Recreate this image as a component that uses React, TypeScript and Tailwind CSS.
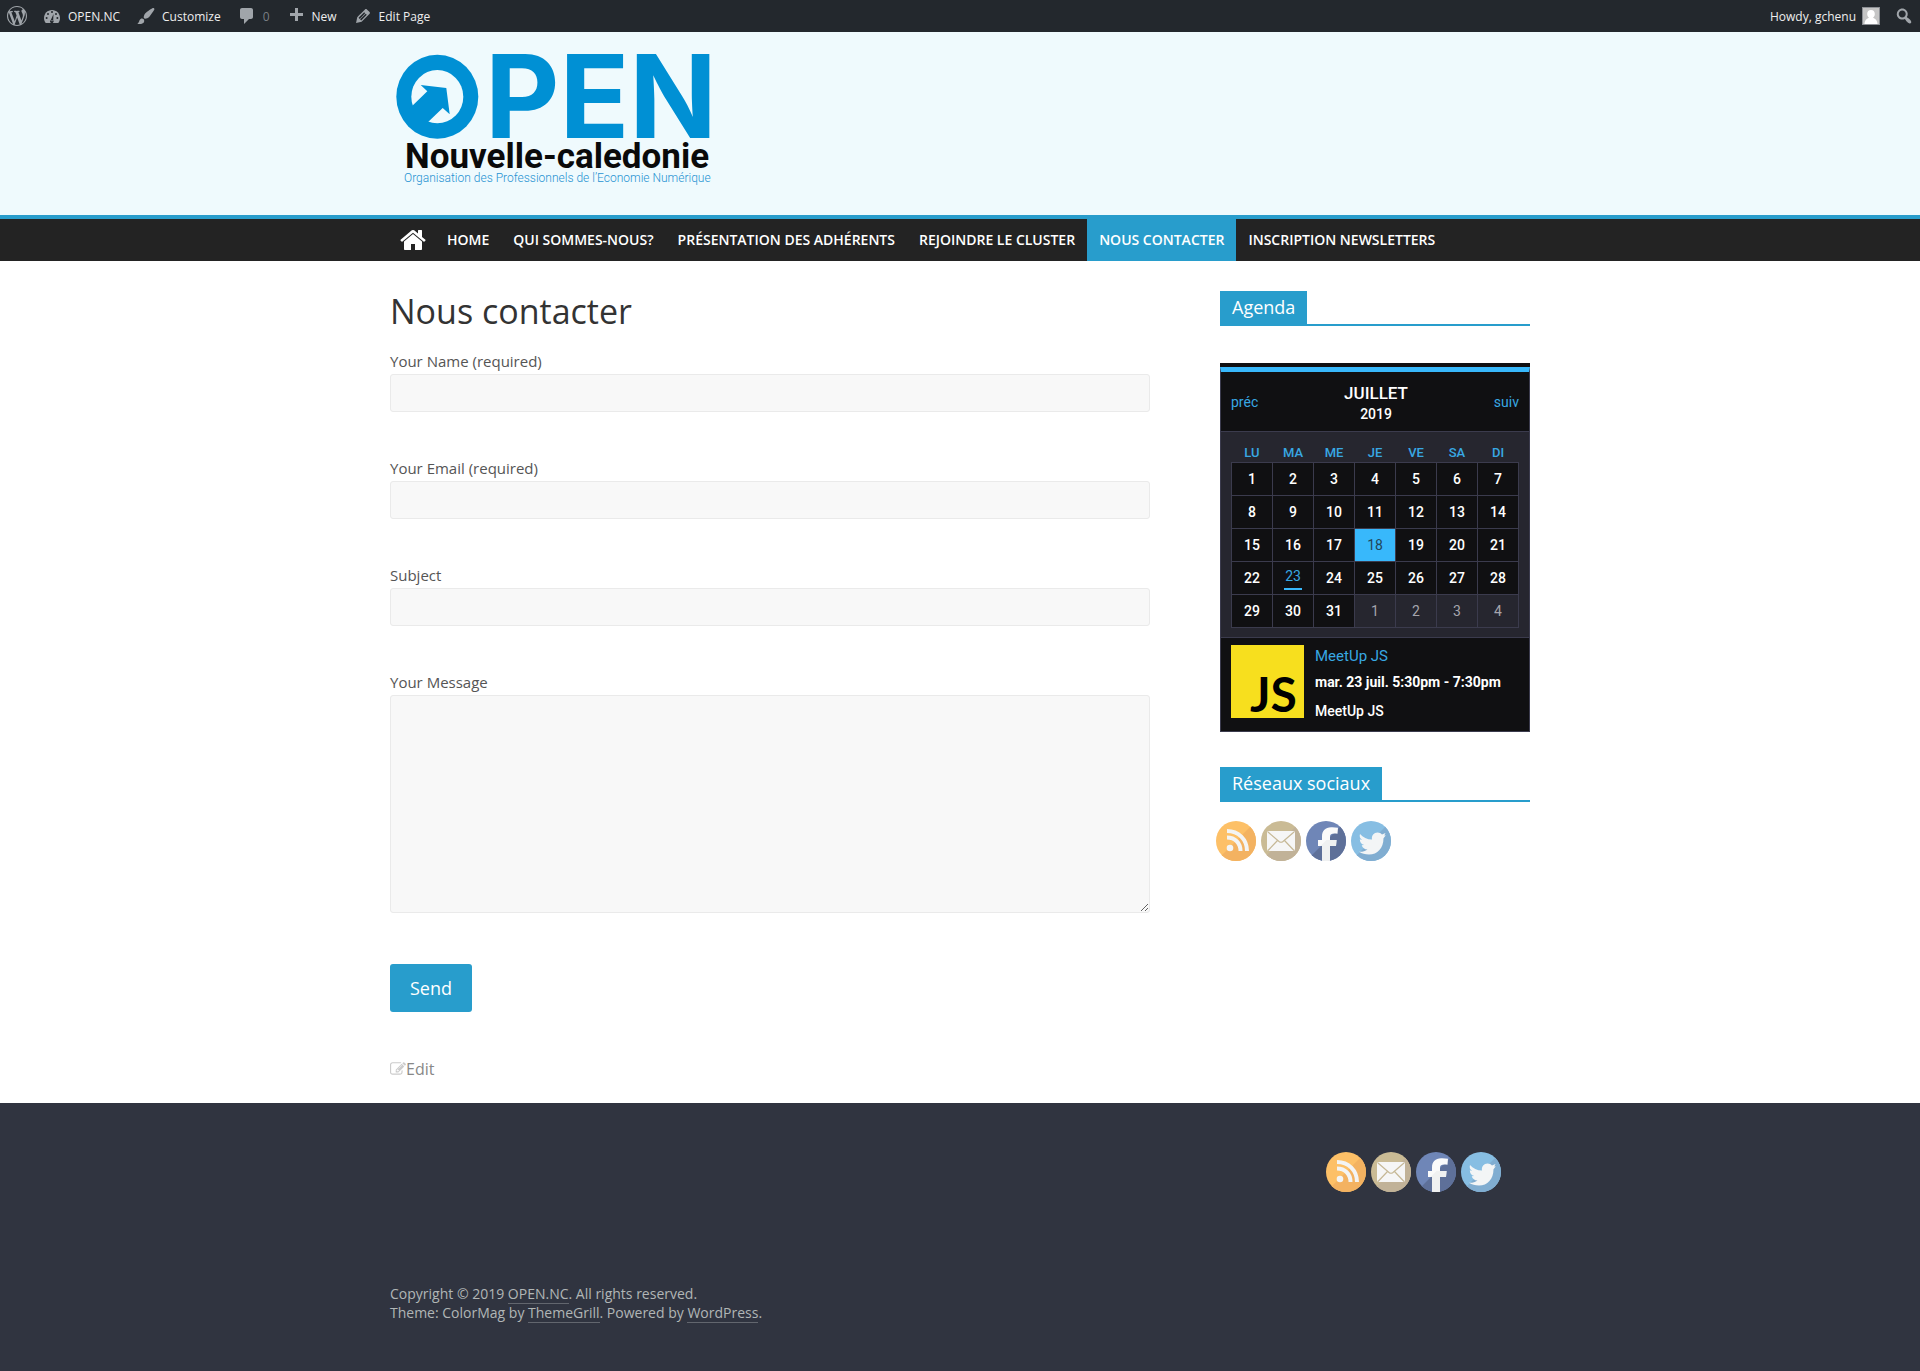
import type { ReactNode } from 'react';

function DashIcon({ d, size = 20 }: { d: string; size?: number }) {
  return (
    <svg width={size} height={size} viewBox="0 0 20 20" fill="#a0a5aa" fillRule="evenodd" aria-hidden="true" className="shrink-0">
      <path d={d} />
    </svg>
  );
}

const DASH = {
  wordpress:
    'M20 10c0-5.51-4.49-10-10-10C4.48 0 0 4.49 0 10c0 5.52 4.48 10 10 10 5.51 0 10-4.48 10-10zM7.78 15.37L4.37 6.22c.55-.02 1.17-.08 1.17-.08.5-.06.44-1.13-.06-1.11 0 0-1.45.11-2.37.11-.18 0-.37 0-.58-.01C4.12 2.69 6.87 1.11 10 1.11c2.33 0 4.45.87 6.05 2.34-.68-.11-1.65.39-1.65 1.58 0 .74.45 1.36.9 2.1.35.61.55 1.36.55 2.46 0 1.49-1.4 5-1.4 5l-3.03-8.37c.54-.02.82-.17.82-.17.5-.05.44-1.25-.06-1.22 0 0-1.44.12-2.38.12-.87 0-2.33-.12-2.33-.12-.5-.03-.56 1.2-.06 1.22l.92.08 1.26 3.41zM17.41 10c.24-.64.74-1.87.43-4.25.7 1.29 1.05 2.71 1.05 4.25 0 3.29-1.73 6.24-4.4 7.78.97-2.59 1.94-5.2 2.92-7.78zM6.1 18.09C3.12 16.65 1.11 13.53 1.11 10c0-1.3.23-2.48.72-3.59C3.25 10.3 4.67 14.2 6.1 18.09zm4.03-6.63l2.58 6.98c-.86.29-1.76.45-2.71.45-.79 0-1.57-.11-2.29-.33.81-2.38 1.62-4.74 2.42-7.1z',
  brush:
    'M18.33 3.57s.27-.8-.31-1.36c-.53-.52-1.22-.24-1.22-.24-.61.3-5.76 3.47-7.67 5.57-.86.96-2.06 3.79-1.09 4.82.92.98 3.96-.17 4.79-1 2.06-2.06 5.21-7.17 5.5-7.79zM1.4 17.65c2.37-1.56 1.46-3.41 3.23-4.64.93-.65 2.22-.62 3.08.29.63.67.8 2.57-.16 3.46-1.57 1.45-4 1.55-6.15.89z',
  comment: 'M5 2h9c1.1 0 2 .9 2 2v7c0 1.1-.9 2-2 2h-2l-5 5v-5H5c-1.1 0-2-.9-2-2V4c0-1.1.9-2 2-2z',
  plus: 'M17 7v3h-5v5H9v-5H4V7h5V2h3v5h5z',
  pencil:
    'M13.89 3.39l2.71 2.72c.46.46.42 1.24.03 1.64l-8.01 8.02-5.56 1.16 1.16-5.58s7.6-7.63 7.99-8.03c.39-.39 1.22-.39 1.68.07zm-2.73 2.79l-5.59 5.61 1.11 1.11 5.54-5.65zm-2.97 8.23l5.58-5.6-1.07-1.08-5.59 5.6z',
  search:
    'M12.14 4.18c1.87 1.87 2.11 4.75.72 6.89.12.1.22.21.36.31.2.16.47.36.81.59.34.24.56.39.66.47.42.31.73.57.94.78.32.32.6.65.84 1 .25.35.44.69.59 1.04.14.35.21.68.18 1-.02.32-.14.59-.36.81s-.49.34-.81.36c-.31.02-.65-.04-.99-.19-.35-.14-.7-.34-1.04-.59-.35-.24-.68-.52-1-.84-.21-.21-.47-.52-.77-.93-.1-.13-.25-.35-.47-.66-.22-.32-.4-.57-.56-.78-.16-.2-.29-.35-.44-.5-2.07 1.09-4.69.76-6.44-.98-2.14-2.15-2.14-5.64 0-7.78 2.15-2.15 5.63-2.15 7.78 0zm-1.41 6.36c1.36-1.37 1.36-3.58 0-4.95-1.37-1.37-3.59-1.37-4.95 0-1.37 1.37-1.37 3.58 0 4.95 1.36 1.37 3.58 1.37 4.95 0z',
};

function DashboardIcon() {
  return (
    <svg width="20" height="20" viewBox="0 0 20 20" aria-hidden="true" className="shrink-0">
      <path fill="#a0a5aa" d="M3.76 17h12.48c1.1-1.37 1.76-3.11 1.76-5 0-4.42-3.58-8-8-8s-8 3.58-8 8c0 1.89.66 3.63 1.76 5z" />
      <g fill="#23282d">
        <circle cx="10" cy="6" r="1" />
        <circle cx="6" cy="8" r="1" />
        <circle cx="14" cy="8" r="1" />
        <circle cx="4.6" cy="12" r="1" />
        <circle cx="15.4" cy="12" r="1" />
        <path d="M11.5 8l-.3 6.2a1.8 1.8 0 1 1-2.4-.3z" />
      </g>
      <circle cx="10" cy="14.6" r=".7" fill="#a0a5aa" />
    </svg>
  );
}

function BarLink({ icon, label, muted }: { icon: ReactNode; label: string; muted?: boolean }) {
  return (
    <a href="#" className="flex h-8 items-center gap-1.5 px-2">
      {icon}
      <span className={muted ? 'pt-0.5 text-[#a0a5aa]/70' : 'pt-0.5'}>{label}</span>
    </a>
  );
}

function AdminBar() {
  return (
    <div className="flex h-8 items-center justify-between bg-[#23282d] font-['Open_Sans',sans-serif] text-[12px] text-[#eeeeee]">
      <div className="flex items-center">
        <a href="#" aria-label="About WordPress" className="px-[7px]">
          <DashIcon d={DASH.wordpress} />
        </a>
        <BarLink icon={<DashboardIcon />} label="OPEN.NC" />
        <BarLink icon={<DashIcon d={DASH.brush} />} label="Customize" />
        <BarLink icon={<DashIcon d={DASH.comment} />} label="0" muted />
        <BarLink icon={<DashIcon d={DASH.plus} />} label="New" />
        <BarLink icon={<DashIcon d={DASH.pencil} />} label="Edit Page" />
      </div>
      <div className="flex items-center gap-2.5 pr-0.5">
        <a href="#" className="flex items-center gap-1.5">
          <span className="pt-0.5">Howdy, gchenu</span>
          <svg width="18" height="18" viewBox="0 0 18 18" aria-hidden="true">
            <rect width="18" height="18" fill="#c5c5c5" />
            <rect x=".5" y=".5" width="17" height="17" fill="none" stroke="#8c8f94" />
            <path fill="#fff" d="M9 3c2.400 0 3.800 1.700 3.800 3.900 0 1.600-.8 3-1.800 3.800 1 .9 4.200 1 4.500 6.300h-13c.3-5.300 3.500-5.400 4.500-6.300-1-.8-1.800-2.200-1.800-3.800C5.200 4.700 6.600 3 9 3z" />
          </svg>
        </a>
        <button type="button" aria-label="Search" className="px-1">
          <DashIcon d={DASH.search} />
        </button>
      </div>
    </div>
  );
}

function SiteLogo() {
  return (
    <svg width="330" height="140" viewBox="0 0 330 140" role="img" aria-label="OPEN Nouvelle-caledonie" className="overflow-visible">
      <ellipse cx="47.300" cy="46.800" rx="41" ry="42" fill="#0090d4" />
      <ellipse cx="47.300" cy="46.700" rx="26" ry="26.600" fill="#effafd" />
      <path fill="#0090d4" d="M30.700 35 56.300 38 59.700 64.300 52.700 58 36 74 18 60 37.300 41.300z" />
      <text x="95" y="88" fontSize="115" className="fill-[#0090d4] font-['Inter',sans-serif] font-bold">PEN</text>
      <text x="15" y="118" fontSize="35" className="fill-[#0a0a0a] font-['Roboto',sans-serif] font-bold">Nouvelle-caledonie</text>
      <text x="14" y="132" fontSize="12" className="fill-[#1f92d2] font-['Roboto',sans-serif] font-light">
        Organisation des Professionnels de l’Economie Numérique
      </text>
    </svg>
  );
}

const NAV = ['Home', 'Qui sommes-nous?', 'Présentation des adhérents', 'Rejoindre le cluster', 'Nous contacter', 'Inscription newsletters'];

function Navigation() {
  return (
    <nav className="border-t-4 border-[#289dcc] bg-[#232323]">
      <div className="mx-auto flex max-w-[1140px] items-stretch">
        <a href="#" aria-label="Accueil" className="flex items-center pr-2 pl-[9px]">
          <svg width="28" height="28" viewBox="0 0 1792 1792" fill="#fff" aria-hidden="true">
            <path d="M1472 992v480q0 26-19 45t-45 19h-384v-384h-256v384h-384q-26 0-45-19t-19-45v-480q0-1 .5-3t.5-3l575-474 575 474q1 2 1 6zm223-69l-62 74q-8 9-21 11h-3q-13 0-21-7l-692-577-692 577q-12 8-24 7-13-2-21-11l-62-74q-8-10-7-23.500t11-21.500l719-599q32-26 76-26t76 26l244 204v-195q0-14 9-23t23-9h192q14 0 23 9t9 23v408l219 182q10 8 11 21.500t-7 23.500z" />
          </svg>
        </a>
        {NAV.map((item) => (
          <a
            key={item}
            href="#"
            className={
              item === 'Nous contacter'
                ? 'bg-[#289dcc] px-3 py-[11px] text-sm font-semibold text-white uppercase'
                : 'px-3 py-[11px] text-sm font-semibold text-white uppercase'
            }
          >
            {item}
          </a>
        ))}
      </div>
    </nav>
  );
}

const FIELD = 'block w-full rounded-[3px] border border-[#eaeaea] bg-[#f8f8f8] px-2 text-base text-[#444444]';
const LABEL = 'block pb-0.5 text-[15px] leading-[22px]';

function TextField({ id, label, type = 'text' }: { id: string; label: string; type?: string }) {
  return (
    <div className="mb-[45px]">
      <label htmlFor={id} className={LABEL}>{label}</label>
      <input id={id} type={type} className={`${FIELD} h-[38px]`} />
    </div>
  );
}

function ContactForm() {
  return (
    <main className="w-2/3">
      <h1 className="mb-[19px] text-[34px] leading-10 text-[#333333]">Nous contacter</h1>
      <form className="text-[#555555]">
        <TextField id="your-name" label="Your Name (required)" />
        <TextField id="your-email" label="Your Email (required)" type="email" />
        <TextField id="your-subject" label="Subject" />
        <label htmlFor="your-message" className={LABEL}>Your Message</label>
        <textarea id="your-message" className={`${FIELD} h-[218px] resize-y`} />
        <button type="button" className="mt-[51px] h-12 rounded-[3px] bg-[#289dcc] px-5 text-lg text-white">Send</button>
      </form>
      <a href="#" className="mt-[45px] flex items-center text-base text-[#888888]">
        <svg width="16" height="16" viewBox="0 0 1792 1792" fill="#cccccc" aria-hidden="true">
          <path d="M888 1184l116-116-152-152-116 116v56h96v96h56zm440-720q-16-16-33 1l-350 350q-17 17-1 33t33-1l350-350q17-17 1-33zm80 594v190q0 119-84.500 203.500t-203.500 84.500h-832q-119 0-203.500-84.500t-84.500-203.500v-832q0-119 84.500-203.500t203.500-84.500h832q63 0 117 25 15 7 18 23 3 17-9 29l-49 49q-14 14-32 8-23-6-45-6h-832q-66 0-113 47t-47 113v832q0 66 47 113t113 47h832q66 0 113-47t47-113v-126q0-13 9-22l64-64q15-15 35-7t20 29zm-96-738l288 288-672 672h-288v-288zm444 132l-92 92-288-288 92-92q28-28 68-28t68 28l152 152q28 28 28 68t-28 68z" />
        </svg>
        Edit
      </a>
    </main>
  );
}

function WidgetTitle({ children }: { children: ReactNode }) {
  return (
    <h3 className="flex border-b-2 border-[#289dcc] text-lg leading-[33px] text-white">
      <span className="bg-[#289dcc] px-3">{children}</span>
    </h3>
  );
}

const DAY_NAMES = ['LU', 'MA', 'ME', 'JE', 'VE', 'SA', 'DI'];
const WEEKS = [0, 1, 2, 3, 4].map((w) => [1, 2, 3, 4, 5, 6, 7].map((d) => w * 7 + d));

function DayCell({ n }: { n: number }) {
  const base = 'h-[33px] border border-[#3b3b4d] p-0 text-center';
  if (n > 31) return <td className={`${base} font-normal text-[#a5a5ad]`}>{n - 31}</td>;
  if (n === 18) return <td className={`${base} bg-[#38b8fb] font-normal text-[#22465a]`}>18</td>;
  if (n === 23)
    return (
      <td className={`${base} bg-[#101012]`}>
        <a href="#" className="inline-block border-b-2 border-[#38b8fb] px-px pb-1 leading-4 font-normal text-[#38a8e3]">23</a>
      </td>
    );
  return <td className={`${base} bg-[#101012] font-medium text-white`}>{n}</td>;
}

function Calendar() {
  return (
    <section aria-label="Agenda" className="mt-[37px] border-t-4 border-[#101012] font-['Roboto',sans-serif] text-sm">
      <div className="border border-t-[5px] border-[#3b3b4d] border-t-[#38b8fb] bg-[#26262f]">
        <header className="flex h-[60px] items-center justify-between border-b border-[#3b3b4d] bg-[#101012] px-2.5 text-[#38a8e3]">
          <a href="#">préc</a>
          <div className="pt-0.5 text-center font-medium text-white">
            <div className="text-[17px] leading-[22px]">JUILLET</div>
            <div className="leading-5">2019</div>
          </div>
          <a href="#">suiv</a>
        </header>
        <div className="px-2.5 pt-2 pb-[9px]">
          <table className="w-full table-fixed border-collapse">
            <thead>
              <tr>
                {DAY_NAMES.map((d) => (
                  <th key={d} className="h-[22px] p-0 pt-1 text-[13px] leading-4 font-medium text-[#38a8e3]">{d}</th>
                ))}
              </tr>
            </thead>
            <tbody>
              {WEEKS.map((week) => (
                <tr key={week[0]}>
                  {week.map((n) => (
                    <DayCell key={n} n={n} />
                  ))}
                </tr>
              ))}
            </tbody>
          </table>
        </div>
        <div className="flex gap-[11px] border-t border-[#3b3b4d] bg-[#101012] px-2.5 pt-[7px] pb-2.5 text-white">
          <svg width="73" height="73" viewBox="0 0 73 73" role="img" aria-label="JS" className="shrink-0 overflow-visible">
            <rect width="73" height="73" fill="#f7df1e" />
            <text x="19" y="67" fontSize="48" className="fill-black font-['Lato',sans-serif] font-bold">JS</text>
          </svg>
          <div>
            <a href="#" className="block text-[15px] leading-[22px] text-[#38a8e3]">MeetUp JS</a>
            <p className="mt-1 leading-[22px] font-bold">mar. 23 juil. 5:30pm - 7:30pm</p>
            <p className="mt-2 leading-5 font-medium">MeetUp JS</p>
          </div>
        </div>
      </div>
    </section>
  );
}

function RoundIcon({ id, light, dark, children }: { id: string; light: string; dark: string; children: ReactNode }) {
  return (
    <svg width="40" height="40" viewBox="0 0 40 40" aria-hidden="true">
      <defs>
        <clipPath id={id}>
          <circle cx="20" cy="20" r="20" />
        </clipPath>
      </defs>
      <g clipPath={`url(#${id})`}>
        <rect width="40" height="40" fill={light} />
        <path d="M40 0V40H0z" fill={dark} />
        {children}
      </g>
    </svg>
  );
}

function SocialLinks({ place }: { place: string }) {
  return (
    <div className="flex gap-[5px]">
      <a href="#" aria-label="RSS">
        <RoundIcon id={`${place}-rss`} light="#fdc067" dark="#f3b261">
          <circle cx="14" cy="27" r="3.300" fill="#f3f4f4" />
          <path d="M11 16.500C19 16.500 24.500 22 24.500 30M11 10C22.500 10 31 18.500 31 30" fill="none" stroke="#f3f4f4" strokeWidth="4" />
        </RoundIcon>
      </a>
      <a href="#" aria-label="Email">
        <RoundIcon id={`${place}-mail`} light="#cabb95" dark="#c1b298">
          <rect x="6" y="10" width="28" height="20" rx="2" fill="#f6f6f6" />
          <path d="M7 11 18 20.500q2 1.500 4 0L33 11M7 29.500 16.500 19.500M33 29.500 23.500 19.500" fill="none" stroke="#c6b896" strokeWidth="1.200" />
        </RoundIcon>
      </a>
      <a href="#" aria-label="Facebook">
        <RoundIcon id={`${place}-fb`} light="#6f86b7" dark="#5e7099">
          <path d="M16 40V25h-4v-6h4v-3.500C16 9.500 19.500 6.500 25 6.300c2.500-.1 4.500.1 7 .5l-.5 6c-5.500-.6-7.500.2-7.500 3.200v3h6.500l-.5 6h-6v15z" fill="#fafafa" />
          <path d="M16 40V25h-1.500L20.500 19h10l-.5 6h-6v15z" fill="#f0f1f1" />
        </RoundIcon>
      </a>
      <a href="#" aria-label="Twitter">
        <RoundIcon id={`${place}-tw`} light="#87bee3" dark="#80add1">
          <path d="M9 13c3 3.500 7 5.500 12 5.500-.7-4 2-7 5.500-7 2 0 3.500.8 4.500 2l3.500-1.500-1.200 2.500 1.500-.3-2.300 3C32.500 27 26.500 33.500 18 33.500c-4 0-7-1-10-2.700 3.500.2 6-.6 8.500-2.300-3 0-5-1.800-5.800-4.200l2.500-.2c-2.800-.8-4.400-3-4.400-5.800l2.400.7C9 17.500 8.200 15.500 9 13z" fill="#f3f5f6" />
        </RoundIcon>
      </a>
    </div>
  );
}

function FooterLink({ children }: { children: ReactNode }) {
  return <a href="#" className="border-b border-[#62666e]">{children}</a>;
}

export default function App() {
  return (
    <div className="flex min-h-screen flex-col bg-white font-['Open_Sans',sans-serif]">
      <AdminBar />
      <header className="bg-[#effafd]">
        <div className="mx-auto max-w-[1140px] pt-[18px] pb-[25px]">
          <a href="#" className="inline-block align-top">
            <SiteLogo />
          </a>
        </div>
      </header>
      <Navigation />
      <div className="mx-auto flex w-full max-w-[1140px] justify-between pt-[30px] pb-[22px]">
        <ContactForm />
        <aside className="w-[310px]">
          <WidgetTitle>Agenda</WidgetTitle>
          <Calendar />
          <div className="mt-[35px]">
            <WidgetTitle>Réseaux sociaux</WidgetTitle>
            <div className="mt-[19px] -ml-1">
              <SocialLinks place="side" />
            </div>
          </div>
        </aside>
      </div>
      <footer className="flex-1 bg-[#303440]">
        <div className="mx-auto max-w-[1140px] pt-[49px]">
          <div className="flex justify-end pr-[29px]">
            <SocialLinks place="foot" />
          </div>
          <p className="mt-[92px] text-sm leading-[19px] text-[#b1b6b6]">
            Copyright © 2019 <FooterLink>OPEN.NC</FooterLink>. All rights reserved.
            <br />
            Theme: ColorMag by <FooterLink>ThemeGrill</FooterLink>. Powered by <FooterLink>WordPress</FooterLink>.
          </p>
        </div>
      </footer>
    </div>
  );
}
